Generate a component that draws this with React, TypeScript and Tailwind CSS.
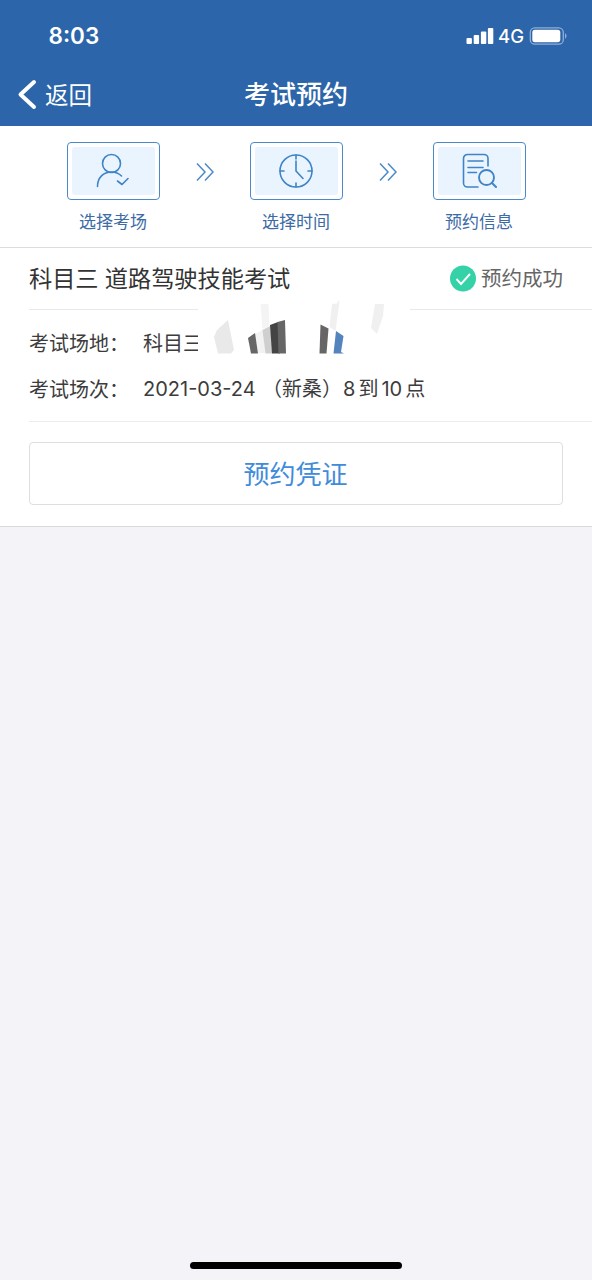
import type { FC, ReactNode } from "react";

const StatusBar: FC = () => (
  <div className="flex h-[72px] items-center justify-between pl-[48.500px] pr-6">
    <span className="font-['Inter','Liberation_Sans',sans-serif] text-[22.500px] leading-none font-semibold">
      8:03
    </span>

    <div className="flex items-center">
      <svg width="28" height="18" viewBox="0 0 28 18" fill="#fff">
        <rect x="0.5" y="11" width="5.4" height="6" rx="1" />
        <rect x="7.7" y="8" width="5.4" height="9" rx="1" />
        <rect x="14.9" y="4.5" width="5.4" height="12.5" rx="1" />
        <rect x="21.9" y="1" width="5.4" height="16" rx="1" />
      </svg>
      <span className="ml-1 w-[26px] font-['Inter','Liberation_Sans',sans-serif] text-[18.500px] leading-none font-medium">
        4G
      </span>
      <svg className="ml-[5px]" width="39" height="18" viewBox="0 0 39 18">
        <rect x="1.3" y="0.8" width="33" height="16.4" rx="4.5" fill="none" stroke="#8fafd8" strokeWidth="1.3" />
        <rect x="3.3" y="2.8" width="28" height="12.4" rx="2.6" fill="#fff" />
        <path d="M36 6.3c2 .8 2 4.6 0 5.4z" fill="#8fafd8" />
      </svg>
    </div>
  </div>
);

const NavBar: FC = () => (
  <div className="relative flex h-[54px] items-start justify-center">
    <button className="absolute top-[6px] left-[17px] flex items-center">
      <svg width="21" height="32" viewBox="0 0 21 32" fill="none" stroke="#fff" strokeWidth="4" strokeLinecap="round" strokeLinejoin="round">
        <path d="M17 4 3.5 16.5 17 29" />
      </svg>
      <span className="ml-[7px] text-[23.500px] leading-8">返回</span>
    </button>
    <h1 className="mt-[5px] text-[26px] leading-8 font-medium">考试预约</h1>
  </div>
);

const Step: FC<{ label: string; children: ReactNode }> = ({ label, children }) => (
  <div className="flex w-[93px] flex-col items-center">
    <div className="flex h-[58px] w-[93px] rounded-[4px] border-[1.5px] border-[#4a8aca] p-[4px]">
      <div className="flex flex-1 items-center justify-center rounded-[3px] bg-[#eaf4ff]">
        <svg width="36" height="36" viewBox="0 0 36 36" fill="none" stroke="#3f84c5" strokeWidth="1.6" strokeLinecap="round" strokeLinejoin="round">
          {children}
        </svg>
      </div>
    </div>
    <span className="mt-[9px] text-[17px] leading-6 whitespace-nowrap text-[#3c6ba5]">
      {label}
    </span>
  </div>
);

const Arrows: FC = () => (
  <svg className="mt-[20px]" width="18" height="20" viewBox="0 0 18 20" fill="none" stroke="#4a8aca" strokeWidth="1.5">
    <path d="M1 1.5 9 10l-8 8.5M9 1.5 17 10l-8 8.5" />
  </svg>
);

const Row: FC<{ label: string; children: ReactNode }> = ({ label, children }) => (
  <div className="flex h-[46px] items-center text-[20px] text-[#3c3c3c]">
    <span className="w-[80px] shrink-0 whitespace-nowrap">{label}</span>
    <span className="w-[34px] shrink-0">：</span>
    {children}
  </div>
);

// Redaction strokes over the name of the exam site
const Smudge: FC = () => (
  <svg className="absolute top-[47px] left-[197px]" width="213" height="62" viewBox="197 295 213 62">
    <rect x="198" y="299" width="212" height="57" fill="#fff" />
    <path d="m214 337 3-7 11-10 6 30-3 3.5h-13z" fill="#e9e9e9" />
    <path d="M260.500 304h8l1 22-7 3z" fill="#f4f4f4" />
    <path d="m255 334 15-8 2 27h-14z" fill="#f2f2f2" />
    <path d="m248 338 7-5 3 20.500h-7z" fill="#666" />
    <path d="m262.500 330 8-4 2 27.500h-7z" fill="#cfcfcf" />
    <path d="m270 325 8-3 2 31.500h-8z" fill="#444" />
    <path d="m277.500 322 7.500-2 1 33.500h-7.500z" fill="#666" />
    <path d="m320.500 324.500 8 4-2 25h-7z" fill="#666" />
    <path d="m332 304 5-.5 1.500-3.500 1 2-4 29-6-4z" fill="#f0f0f0" />
    <path d="m336 331 7.500 5-2.500 16 3 1.500h-10.500z" fill="#5384bd" />
    <path d="M375 304h9l-1 12-6 18-6-6z" fill="#f0f0f0" />
  </svg>
);

const App: FC = () => (
  <div className="flex h-[1280px] w-[592px] flex-col overflow-hidden bg-[#f3f3f8] font-['Noto_Sans_CJK_SC',sans-serif]">
    <header className="h-[126px] bg-[#2c65a9] text-white">
      <StatusBar />
      <NavBar />
    </header>

    <section className="flex h-[122px] items-start justify-between border-b border-[#dcdcdc] bg-white px-[66.500px] pt-[16px]">
      <Step label="选择考场">
        <circle cx="16.5" cy="10.5" r="9" />
        <path d="M2.500 33.500c0-9 6-14.500 14-14.500 4.500 0 7.500 1.500 10 4M22.500 28l4.500 3.500 6-6" />
      </Step>
      <Arrows />
      <Step label="选择时间">
        <circle cx="18" cy="18" r="16" />
        <path d="M18 2v4M18 30v4M2 18h4M30 18h4M18 8v10l7 7.500" />
      </Step>
      <Arrows />
      <Step label="预约信息">
        <path d="M27 13V5.500a4 4 0 0 0-4-4H6.500a4 4 0 0 0-4 4V30a4 4 0 0 0 4 4H17M7 8h15M7 14.500h15M7 19.500h8.500" />
        <circle cx="25.5" cy="24.5" r="7.5" strokeWidth="1.9" />
        <path d="m31 30 4 4" strokeWidth="2" />
      </Step>
    </section>

    <section className="relative h-[279px] border-b border-[#d9d9dc] bg-white">
      <div className="ml-[29px] flex h-[62px] items-center justify-between border-b border-[#e8e8e8] pr-[29px]">
        <h2 className="-mt-[3px] text-[23.200px] leading-8 [word-spacing:1px] whitespace-nowrap text-[#333]">
          科目三 道路驾驶技能考试
        </h2>
        <div className="flex items-center gap-[5px]">
          <svg width="27" height="27" viewBox="0 0 27 27" fill="none">
            <circle cx="14" cy="13.5" r="13" fill="#34d2a6" />
            <path d="m7.500 14 4.500 5 9-10" stroke="#fff" strokeWidth="1.9" />
          </svg>
          <span className="-mt-[3px] text-[20.500px] leading-8 text-[#666]">预约成功</span>
        </div>
      </div>

      <div className="ml-[29px] h-[112px] border-b border-[#ececec] pt-[10px]">
        <Row label="考试场地">
          <span className="whitespace-nowrap">科目三</span>
        </Row>
        <Row label="考试场次">
          <span className="flex font-['Inter','Noto_Sans_CJK_SC',sans-serif] whitespace-nowrap">
            <span className="w-[119px]">2021-03-24</span>
            <span className="w-[81px]">（新桑）</span>
            <span className="flex gap-[3px]">
              <span>8</span>
              <span>到</span>
              <span>10</span>
              <span>点</span>
            </span>
          </span>
        </Row>
      </div>

      <button className="mt-[20px] ml-[29px] flex h-[63px] w-[534px] items-center justify-center rounded-[4px] border-[1.5px] border-[#dedede] pr-px pb-[2px] text-[26px] text-[#3f8cda]">
        预约凭证
      </button>

      <Smudge />
    </section>

    <div className="mt-auto mb-[11px] h-[7px] w-[212px] self-center rounded-full bg-black" />
  </div>
);

export default App;
